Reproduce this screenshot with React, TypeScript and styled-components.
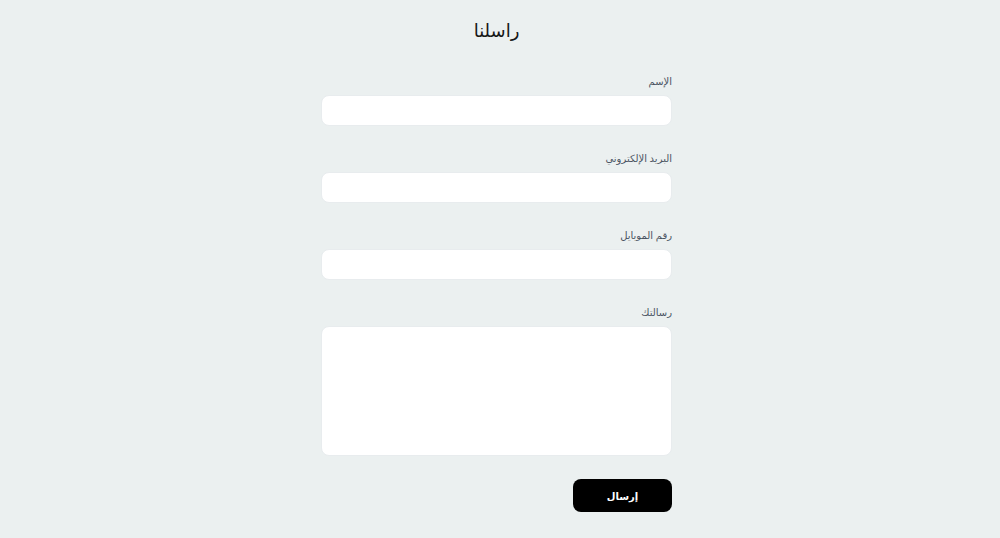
import React from "react";
import styled, { createGlobalStyle } from "styled-components";

const GlobalStyle = createGlobalStyle`
  html, body {
    margin: 0;
    padding: 0;
    background: #ebf0f0;
  }
  body {
    font-family: "Noto Sans", "DejaVu Sans", sans-serif;
  }
`;

// PAGE
const Page = styled.div`
  min-height: 538px;
  box-sizing: border-box;
  padding: 16px 7px 0 0;
  display: flex;
  flex-direction: column;
  align-items: center;
  direction: rtl;
`;

const Title = styled.h1`
  margin: 0;
  font-size: 18px;
  line-height: 28px;
  font-weight: 400;
  color: #161616;
`;

// FORM
const Form = styled.form`
  width: 351px;
  margin-top: 30px;
  display: flex;
  flex-direction: column;
  gap: 25px;
`;

const Field = styled.div`
  display: flex;
  flex-direction: column;
  gap: 7px;
`;

const Label = styled.label`
  font-size: 10px;
  line-height: 14px;
  color: #4b5563;
`;

const Input = styled.input`
  box-sizing: border-box;
  height: 31px;
  width: 100%;
  border: 1px solid #e8ecee;
  border-radius: 8px;
  background: #fff;
  outline: none;
  padding: 0 10px;
  font: inherit;
`;

const TextArea = styled.textarea`
  box-sizing: border-box;
  height: 130px;
  width: 100%;
  border: 1px solid #e8ecee;
  border-radius: 8px;
  background: #fff;
  outline: none;
  resize: none;
  padding: 8px 10px;
  font: inherit;
`;

const Actions = styled.div`
  display: flex;
  justify-content: flex-start;
  margin-top: -2px;
`;

const SubmitButton = styled.button`
  width: 99px;
  height: 33px;
  border: none;
  border-radius: 8px;
  background: #000;
  color: #fff;
  font-family: inherit;
  font-size: 10px;
  font-weight: 600;
  cursor: pointer;
`;

const fields = [
  { id: "name", label: "الإسم", type: "text" },
  { id: "email", label: "البريد الإلكتروني", type: "email" },
  { id: "phone", label: "رقم الموبايل", type: "tel" },
];

const App: React.FC = () => {
  return (
    <>
      <GlobalStyle />
      <Page>
        <Title>راسلنا</Title>
        <Form onSubmit={(e) => e.preventDefault()}>
          {fields.map((f) => (
            <Field key={f.id}>
              <Label htmlFor={f.id}>{f.label}</Label>
              <Input id={f.id} type={f.type} />
            </Field>
          ))}
          <Field>
            <Label htmlFor="message">رسالتك</Label>
            <TextArea id="message" />
          </Field>
          <Actions>
            <SubmitButton type="submit">إرسال</SubmitButton>
          </Actions>
        </Form>
      </Page>
    </>
  );
};

export default App;
